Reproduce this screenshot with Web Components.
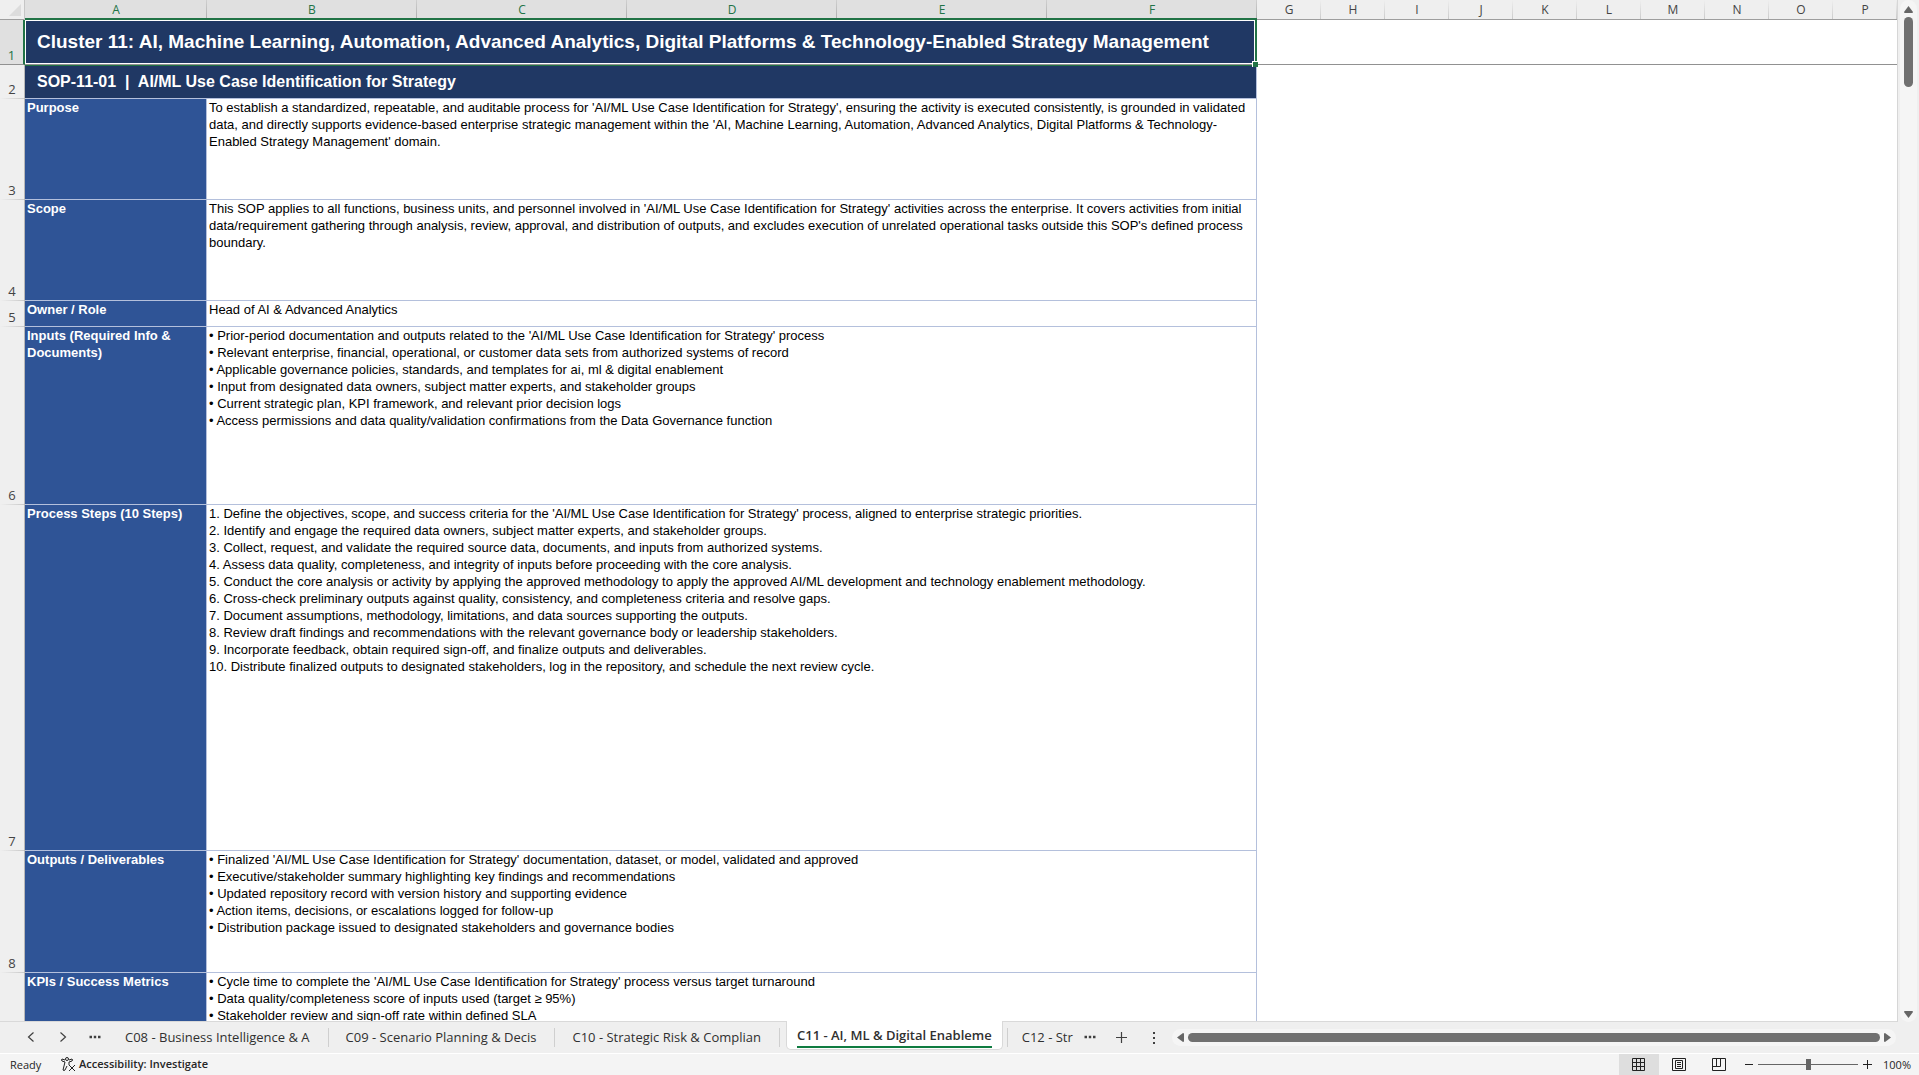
<!DOCTYPE html>
<html lang="en">
<head>
<meta charset="utf-8">
<title>SOP Workbook</title>
<style>
  html, body { margin: 0; height: 100%; overflow: hidden; }
  body { font-family: "Open Sans", "Noto Sans", sans-serif; color: #262626; }
</style>
</head>
<body>
<xl-workbook>
  <xl-sheet slot="sheet">
    <span slot="title">Cluster 11: AI, Machine Learning, Automation, Advanced Analytics, Digital Platforms &amp; Technology-Enabled Strategy Management</span>
    <span slot="subtitle">SOP-11-01&nbsp; |&nbsp; AI/ML Use Case Identification for Strategy</span>
    <span slot="h3">Purpose</span>
    <span slot="c3">To establish a standardized, repeatable, and auditable process for 'AI/ML Use Case Identification for Strategy', ensuring the activity is executed consistently, is grounded in validated<br>data, and directly supports evidence-based enterprise strategic management within the 'AI, Machine Learning, Automation, Advanced Analytics, Digital Platforms &amp; Technology-<br>Enabled Strategy Management' domain.</span>
    <span slot="h4">Scope</span>
    <span slot="c4">This SOP applies to all functions, business units, and personnel involved in 'AI/ML Use Case Identification for Strategy' activities across the enterprise. It covers activities from initial<br>data/requirement gathering through analysis, review, approval, and distribution of outputs, and excludes execution of unrelated operational tasks outside this SOP's defined process<br>boundary.</span>
    <span slot="h5">Owner / Role</span>
    <span slot="c5">Head of AI &amp; Advanced Analytics</span>
    <span slot="h6">Inputs (Required Info &amp;<br>Documents)</span>
    <span slot="c6">• Prior-period documentation and outputs related to the 'AI/ML Use Case Identification for Strategy' process<br>• Relevant enterprise, financial, operational, or customer data sets from authorized systems of record<br>• Applicable governance policies, standards, and templates for ai, ml &amp; digital enablement<br>• Input from designated data owners, subject matter experts, and stakeholder groups<br>• Current strategic plan, KPI framework, and relevant prior decision logs<br>• Access permissions and data quality/validation confirmations from the Data Governance function</span>
    <span slot="h7">Process Steps (10 Steps)</span>
    <span slot="c7">1. Define the objectives, scope, and success criteria for the 'AI/ML Use Case Identification for Strategy' process, aligned to enterprise strategic priorities.<br>2. Identify and engage the required data owners, subject matter experts, and stakeholder groups.<br>3. Collect, request, and validate the required source data, documents, and inputs from authorized systems.<br>4. Assess data quality, completeness, and integrity of inputs before proceeding with the core analysis.<br>5. Conduct the core analysis or activity by applying the approved methodology to apply the approved AI/ML development and technology enablement methodology.<br>6. Cross-check preliminary outputs against quality, consistency, and completeness criteria and resolve gaps.<br>7. Document assumptions, methodology, limitations, and data sources supporting the outputs.<br>8. Review draft findings and recommendations with the relevant governance body or leadership stakeholders.<br>9. Incorporate feedback, obtain required sign-off, and finalize outputs and deliverables.<br>10. Distribute finalized outputs to designated stakeholders, log in the repository, and schedule the next review cycle.</span>
    <span slot="h8">Outputs / Deliverables</span>
    <span slot="c8">• Finalized 'AI/ML Use Case Identification for Strategy' documentation, dataset, or model, validated and approved<br>• Executive/stakeholder summary highlighting key findings and recommendations<br>• Updated repository record with version history and supporting evidence<br>• Action items, decisions, or escalations logged for follow-up<br>• Distribution package issued to designated stakeholders and governance bodies</span>
    <span slot="h9">KPIs / Success Metrics</span>
    <span slot="c9">• Cycle time to complete the 'AI/ML Use Case Identification for Strategy' process versus target turnaround<br>• Data quality/completeness score of inputs used (target ≥ 95%)<br>• Stakeholder review and sign-off rate within defined SLA</span>
  </xl-sheet>
  <xl-scrollbar slot="vscroll" direction="vertical"></xl-scrollbar>
  <xl-tabbar slot="tabs">
    <xl-tab>C08 - Business Intelligence &amp; A</xl-tab>
    <xl-tab>C09 - Scenario Planning &amp; Decis</xl-tab>
    <xl-tab>C10 - Strategic Risk &amp; Complian</xl-tab>
    <xl-tab active>C11 - AI, ML &amp; Digital Enableme</xl-tab>
    <xl-tab cut>C12 - Str</xl-tab>
  </xl-tabbar>
  <xl-statusbar slot="status"></xl-statusbar>
</xl-workbook>

<script>
const define = (name, html, setup) => {
  const template = document.createElement('template');
  template.innerHTML = html;
  customElements.define(name, class extends HTMLElement {
    constructor() {
      super();
      this.attachShadow({ mode: 'open' }).append(template.content.cloneNode(true));
    }
    connectedCallback() { if (setup) setup(this, this.shadowRoot); }
  });
};

define('xl-workbook', `
  <style>
    :host { display: flex; flex-direction: column; height: 100vh; background: #efefef; }
    .main { flex: 1; min-height: 0; display: flex; }
    .sheet { flex: 1; min-width: 0; overflow: hidden; background: #fff; border-right: 1px solid #d6d6d6; border-bottom: 1px solid #d9d9d9; }
    .rail { display: flex; width: 21px; }
  </style>
  <main class="main">
    <div class="sheet"><slot name="sheet"></slot></div>
    <div class="rail"><slot name="vscroll"></slot></div>
  </main>
  <slot name="tabs"></slot>
  <slot name="status"></slot>`);

const lettered = 'ABCDEFGHIJKLMNOP'.split('');
const rows = [
  { n: 3, height: 101 }, { n: 4, height: 101 }, { n: 5, height: 26 }, { n: 6, height: 178 },
  { n: 7, height: 346 }, { n: 8, height: 122 }, { n: 9, height: 122, unnumbered: true }
];

define('xl-sheet', `
  <style>
    :host { display: block; }
    table { border-collapse: separate; border-spacing: 0; table-layout: fixed; width: 100%; }
    th, td { padding: 0; box-sizing: border-box; }
    .row-col { width: 25px; }
    .label-col { width: 182px; }
    .wide-col { width: 210px; }
    .narrow-col { width: 64px; }
    thead th { height: 20px; font-size: 12px; line-height: 20px; font-weight: 400; color: #444;
      background: linear-gradient(#efefef, #c9c9c9) right / 1px 100% no-repeat #efefef; box-shadow: inset 0 -1px #9e9e9e; }
    thead th.on { color: #217346; background: linear-gradient(#d0d0d0, #ababab) right / 1px 100% no-repeat #e0e0e0; box-shadow: inset 0 -2px #217346; }
    thead th.corner { background: #efefef; border-right: 1px solid #c6c6c6; }
    .corner svg { display: block; margin-left: 9px; }
    tbody th.num { font-size: 13px; line-height: 17px; font-weight: 400; color: #444; vertical-align: bottom; padding-bottom: 1px;
      text-align: center; background: linear-gradient(90deg, #efefef, #c9c9c9) bottom / 100% 1px no-repeat #efefef; border-right: 1px solid #b8b8b8; }
    tbody th.num.on { color: #217346; background: #e0e0e0; padding-bottom: 0; border-bottom: 1px solid #919191; border-right: 2px solid #217346; }
    .title { position: relative; height: 45px; background: #203864; color: #fff; font: bold 19px/26px "Liberation Sans", Arial, sans-serif;
      text-align: left; padding-left: 12px; white-space: nowrap; border-bottom: 1px solid #919191; border-right: 2px solid #217346; box-shadow: inset 0 0 0 1px #fff, 0 1px 0 #217346; }
    .handle { position: absolute; right: -3px; bottom: -3px; width: 5px; height: 5px; background: #217346; border: 1px solid #fff; border-width: 1px 0 0 1px; }
    .frozen { border-bottom: 1px solid #919191; }
    .sub { height: 34px; background: #203864; color: #fff; font: bold 16px/24px "Liberation Sans", Arial, sans-serif; text-align: left;
      padding-left: 12px; border-bottom: 1px solid #b4c0dc; border-right: 1px solid #b4c0dc; }
    .head, .body { vertical-align: top; font: 13px/17px "Liberation Sans", Arial, sans-serif; padding: 0 2px;
      border-right: 1px solid #b4c0dc; border-bottom: 1px solid #b4c0dc; white-space: nowrap; text-align: left; }
    .head { background: #2f5496; color: #fff; font-weight: bold; }
    .body { color: #000; }
  </style>
  <table>
    <colgroup><col class="row-col"><col class="label-col"><col class="wide-col" span="5"><col class="narrow-col" span="9"><col></colgroup>
    <thead><tr><th class="corner" aria-label="Select all"><svg width="12" height="12" aria-hidden="true"><path d="M12 0V12H0Z" fill="#dcdcdc"/></svg></th></tr></thead>
    <tbody>
      <tr><th class="num on" scope="row">1</th><td class="title" colspan="6"><slot name="title"></slot><span class="handle"></span></td><td class="frozen" colspan="10"></td></tr>
      <tr><th class="num" scope="row">2</th><td class="sub" colspan="6"><slot name="subtitle"></slot></td><td colspan="10"></td></tr>
    </tbody>
  </table>`, (host, root) => {
  const header = root.querySelector('thead tr');
  lettered.forEach((letter, i) => {
    const th = document.createElement('th');
    th.scope = 'col';
    th.textContent = letter;
    if (i < 6) th.className = 'on';
    header.append(th);
  });
  const body = root.querySelector('tbody');
  for (const { n, height, unnumbered } of rows) {
    const tr = document.createElement('tr');
    tr.style.height = height + 'px';
    tr.innerHTML = `<th class="num" scope="row">${unnumbered ? '' : n}</th><td class="head"><slot name="h${n}"></slot></td>
      <td class="body" colspan="5"><slot name="c${n}"></slot></td><td colspan="10"></td>`;
    body.append(tr);
  }
});

define('xl-scrollbar', `
  <style>
    :host { display: flex; flex: 1; align-items: center; gap: 3px; background: #f5f5f5; border-radius: 10px; }
    :host([direction=vertical]) { flex-direction: column; margin: 0 2px; padding: 6px 0 4px; gap: 4px; }
    :host([direction=horizontal]) { height: 17px; padding: 0 4px; }
    .track { flex: 1; display: flex; align-self: stretch; justify-content: center; align-items: flex-start; }
    .thumb { background: #707070; border-radius: 5px; }
    :host([direction=vertical]) .thumb { width: 9px; height: 70px; }
    :host([direction=horizontal]) .track { align-items: center; }
    :host([direction=horizontal]) .thumb { width: 100%; height: 9px; }
    button { all: unset; display: flex; }
    svg { fill: #666; }
    :host([direction=horizontal]) svg { transform: rotate(-90deg); }
  </style>
  <button aria-label="Scroll back"><svg width="9" height="7"><path d="M4.500 0 9 6Q9 7 8 7H1Q0 7 0 6Z"/></svg></button>
  <div class="track"><div class="thumb"></div></div>
  <button aria-label="Scroll forward"><svg width="9" height="7"><path d="M4.500 7 9 1Q9 0 8 0H1Q0 0 0 1Z"/></svg></button>`);

define('xl-tab', `
  <style>
    :host { display: flex; flex: none; height: 30px; align-items: center; }
    button { all: unset; box-sizing: border-box; height: 19px; line-height: 19px; padding: 0 18px 0 17px; border-right: 1px solid #cfcfcf; font-size: 13px; color: #303030; white-space: nowrap; }
    :host([active]) { align-items: flex-start; margin: 0 4px 0 6px; }
    :host([active]) button { height: 29px; margin-top: -1px; padding: 3px 10px 0; background: #fff; border: 1px solid #d9d9d9; border-top: 0; border-radius: 0 0 5px 5px; font-weight: 600; }
    :host([active]) span { display: block; height: 20px; border-bottom: 2px solid #107c41; }
    :host([cut]) button { border-right: 0; border-left: 1px solid #cfcfcf; padding: 0 0 0 14px; }
  </style>
  <button role="tab"><span><slot></slot></span></button>`);

define('xl-tabbar', `
  <style>
    :host { display: flex; align-items: center; height: 30px; padding-bottom: 1px; background: #efefef; border-bottom: 1px solid #fff; }
    button { all: unset; display: flex; flex: none; justify-content: center; width: 32px; }
    .nav { display: flex; width: 108px; padding-left: 15px; box-sizing: border-box; }
    .nav button:last-child { width: 31px; }
    .tabs { display: flex; padding-right: 1px; }
    .scroll { flex: 1; display: flex; padding: 0 23px 0 2px; }
    svg { fill: none; stroke: #404040; stroke-width: 1.200; display: block; }
  </style>
  <div class="nav">
    <button aria-label="Previous sheets"><svg width="14" height="14"><path d="M9.500 2.500 4.500 7 9.500 11.500"/></svg></button>
    <button aria-label="Next sheets"><svg width="14" height="14"><path d="M4.500 2.500 9.500 7 4.500 11.500"/></svg></button>
    <button aria-label="All sheets"><svg width="14" height="14"><path d="M1.500 7H4M5.800 7H8.200M10 7H12.500" stroke-width="2.500"/></svg></button>
  </div>
  <div class="tabs" role="tablist"><slot></slot></div>
  <button aria-label="More sheets"><svg width="14" height="14"><path d="M1.500 7H4M5.800 7H8.200M10 7H12.500" stroke-width="2.500"/></svg></button>
  <button aria-label="New sheet"><svg width="13" height="13"><path d="M6.500 1V12M1 6.500H12"/></svg></button>
  <button aria-label="Resize"><svg width="4" height="14"><path d="M2 2V4M2 7V9M2 12V14" stroke-width="2"/></svg></button>
  <div class="scroll"><xl-scrollbar direction="horizontal"></xl-scrollbar></div>`);

define('xl-statusbar', `
  <style>
    :host { display: flex; align-items: stretch; height: 21px; background: #f4f4f4; font-size: 11px; line-height: 21px; padding: 0 8px 0 10px; }
    button { all: unset; box-sizing: border-box; display: flex; align-items: center; justify-content: center; padding-bottom: 2px; }
    .ready { width: 50px; }
    .access { font-weight: 600; gap: 3px; }
    .space { flex: 1; }
    .view { width: 40px; }
    .view.on { background: #dedede; }
    svg { display: block; fill: none; stroke: #222; }
    .zoom { display: flex; align-items: center; gap: 5px; padding-left: 6px; }
    .zoom button { padding-bottom: 0; }
    input { appearance: none; width: 100px; height: 14px; margin: 0; background: linear-gradient(#666, #666) center / 100% 1px no-repeat; }
    input::-webkit-slider-thumb { appearance: none; width: 5px; height: 11px; background: #666; }
    .pct { padding-left: 6px; }
  </style>
  <span class="ready">Ready</span>
  <button class="access"><svg width="16" height="16"><circle cx="7" cy="3" r="1.500"/><path d="M5 4 2 3Q1 4 2 5L5 6 3 14Q4 15 5 14L7 10M9 4 12 3Q13 4 12 5L9 6V9M9 9 15 15M15 9 9 15"/></svg>Accessibility: Investigate</button>
  <span class="space"></span>
  <button class="view on" aria-label="Normal view"><svg width="14" height="14"><path d="M.5 1.500H12.500V13.500H.5ZM4.500 1.500V13.500M8.500 1.500V13.500M.5 5.500H12.500M.5 9.500H12.500"/></svg></button>
  <button class="view" aria-label="Page layout view"><svg width="14" height="14"><path d="M.5 1.500H13.500V13.500H.5ZM3.500 3.500H10.500V11.500H3.500ZM5 5.500H9M5 7.500H9M5 9.500H9"/></svg></button>
  <button class="view" aria-label="Page break preview"><svg width="14" height="14"><path d="M.5 1.500H13.500V13.500H.5ZM.5 9.500H8.500V1.500M4.500 1.500V9.500"/></svg></button>
  <div class="zoom">
    <button aria-label="Zoom out"><svg width="8" height="8"><path d="M0 3.500H8"/></svg></button>
    <input type="range" min="0" max="100" value="50" aria-label="Zoom">
    <button aria-label="Zoom in"><svg width="9" height="9"><path d="M0 4.500H9M4.500 0V9"/></svg></button>
    <span class="pct">100%</span>
  </div>`);
</script>
</body>
</html>
